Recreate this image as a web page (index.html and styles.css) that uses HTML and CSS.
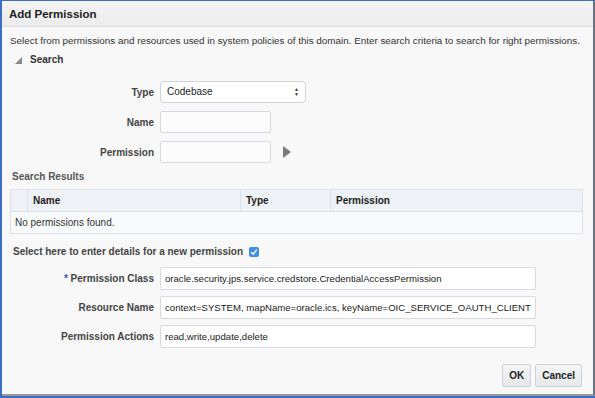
FILE: index.html
```html
<!DOCTYPE html>
<html lang="en">
<head>
    <meta charset="UTF-8">
    <title>Add Permission</title>
    <link rel="stylesheet" href="styles.css">
</head>
<body>
    <div class="dialog">
        <div class="dialog-header">Add Permission</div>
        <div class="dialog-body">
            <p class="intro">Select from permissions and resources used in system policies of this domain. Enter search criteria to search for right permissions.</p>

            <div class="section-title"><span class="disclosure"></span>Search</div>

            <div class="search-form">
                <label class="field-label">Type</label>
                <div class="select-box">Codebase<span class="spinner">&#9650;<br>&#9660;</span></div>

                <label class="field-label">Name</label>
                <div class="field-row"><input class="text-input short" type="text"></div>

                <label class="field-label">Permission</label>
                <div class="field-row">
                    <input class="text-input short" type="text">
                    <span class="go-arrow"></span>
                </div>
            </div>

            <div class="sub-title">Search Results</div>
            <div class="results-table">
                <div class="table-head">
                    <div class="col-blank"></div>
                    <div class="col-name">Name</div>
                    <div class="col-type">Type</div>
                    <div class="col-perm">Permission</div>
                </div>
                <div class="table-empty">No permissions found.</div>
            </div>

            <div class="new-perm">
                Select here to enter details for a new permission
                <span class="checkbox">
                    <svg width="8" height="8" viewBox="0 0 8 8"><path d="M1.2 4.2 L3.2 6.2 L6.8 1.6" fill="none" stroke="#fff" stroke-width="1.4"/></svg>
                </span>
            </div>

            <div class="detail-form">
                <label class="field-label"><span class="required">*</span> Permission Class</label>
                <input class="text-input long" type="text" value="oracle.security.jps.service.credstore.CredentialAccessPermission">

                <label class="field-label">Resource Name</label>
                <input class="text-input long" type="text" value="context=SYSTEM, mapName=oracle.ics, keyName=OIC_SERVICE_OAUTH_CLIENT">

                <label class="field-label">Permission Actions</label>
                <input class="text-input long" type="text" value="read,write,update,delete">
            </div>

            <div class="buttons">
                <button class="btn">OK</button>
                <button class="btn">Cancel</button>
            </div>
        </div>
    </div>
</body>
</html>
```

FILE: styles.css
```css
html, body {
    margin: 0;
    padding: 0;
    background: #3c6fc4;
}
body {
    font-family: "Liberation Sans", Arial, sans-serif;
    font-size: 10px;
    color: #333;
}
.dialog {
    width: 591px;
    height: 393px;
    margin-left: 2px;
    margin-top: 1px;
    background: #f8f8f8;
    border-right: 2px solid #6b7280;
    border-bottom: 2px solid #9a9a9a;
    display: flex;
    flex-direction: column;
}
.dialog-header {
    height: 25px;
    line-height: 27px;
    padding-left: 7px;
    font-size: 11.5px;
    font-weight: bold;
    color: #222;
    background: linear-gradient(#f4f4f4, #ececec);
    border-bottom: 1px solid #d8dde3;
}
.dialog-body {
    flex: 1;
    padding: 0 9px 0 8px;
}
.intro {
    margin: 7px 0 0 0;
    font-size: 9.87px;
    line-height: 14px;
    white-space: nowrap;
}
.section-title {
    margin-top: 5px;
    margin-left: 5px;
    font-weight: bold;
    line-height: 14px;
    display: flex;
    align-items: center;
}
.disclosure {
    width: 0;
    height: 0;
    border-left: 7px solid transparent;
    border-bottom: 7px solid #8a8a8a;
    margin-right: 8px;
}
.search-form {
    display: grid;
    grid-template-columns: 144px auto;
    justify-content: start;
    align-items: center;
    column-gap: 6px;
    row-gap: 8px;
    margin-top: 14px;
}
.field-label {
    text-align: right;
    font-weight: bold;
    color: #444;
}
.field-row {
    display: flex;
    align-items: center;
}
.select-box {
    box-sizing: border-box;
    width: 146px;
    height: 22px;
    border: 1px solid #cfd3d8;
    border-radius: 4px;
    background: #fff;
    padding: 0 6px;
    line-height: 20px;
    display: flex;
    justify-content: space-between;
    color: #222;
}
.spinner {
    font-size: 5px;
    line-height: 5px;
    padding-top: 5px;
    color: #333;
}
.text-input {
    box-sizing: border-box;
    height: 22px;
    border: 1px solid #d6dae0;
    border-radius: 2px;
    background: #fff;
    font-family: "Liberation Sans", Arial, sans-serif;
    font-size: 9.6px;
    color: #222;
    padding: 0 2px 0 4px;
    margin: 0;
}
.text-input.short {
    width: 111px;
    background: #fcfcfd;
}
.text-input.long {
    width: 376px;
    height: 23px;
}
.go-arrow {
    width: 0;
    height: 0;
    margin-left: 12px;
    border-top: 6px solid transparent;
    border-bottom: 6px solid transparent;
    border-left: 8px solid #7a7a7a;
}
.sub-title {
    margin-top: 7px;
    margin-left: 2px;
    font-weight: bold;
    color: #555;
    line-height: 14px;
}
.results-table {
    margin-top: 5px;
    width: 571px;
    border: 1px solid #dde2e8;
    background: #f6f8fb;
}
.table-head {
    display: flex;
    height: 21px;
    line-height: 21px;
    background: #eef1f5;
    border-bottom: 1px solid #dde2e8;
    font-weight: bold;
    color: #222;
}
.table-head > div {
    box-sizing: border-box;
    padding-left: 5px;
    border-right: 1px solid #dde2e8;
}
.col-blank { width: 17px; }
.col-name { width: 213px; }
.col-type { width: 90px; }
.col-perm { flex: 1; border-right: none !important; }
.table-empty {
    height: 21px;
    line-height: 21px;
    padding-left: 4px;
    background: #f9fafc;
}
.new-perm {
    margin-top: 11px;
    margin-left: 3px;
    font-weight: bold;
    color: #444;
    display: flex;
    align-items: center;
    line-height: 14px;
}
.checkbox {
    width: 10px;
    height: 10px;
    margin-left: 6px;
    border-radius: 2px;
    background: #3d8ee6;
    display: flex;
    align-items: center;
    justify-content: center;
}
.required {
    color: #1d63c4;
}
.detail-form {
    display: grid;
    grid-template-columns: 144px auto;
    justify-content: start;
    align-items: center;
    column-gap: 6px;
    row-gap: 6px;
    margin-top: 8px;
}
.buttons {
    display: flex;
    justify-content: flex-end;
    gap: 4px;
    margin-top: 16px;
    margin-right: 2px;
}
.btn {
    height: 23px;
    padding: 0 6px;
    border: 1px solid #cdd1d6;
    border-radius: 2px;
    background: linear-gradient(#f4f5f6, #e6e8ea);
    font-family: "Liberation Sans", Arial, sans-serif;
    font-size: 10px;
    font-weight: bold;
    color: #222;
}
```
